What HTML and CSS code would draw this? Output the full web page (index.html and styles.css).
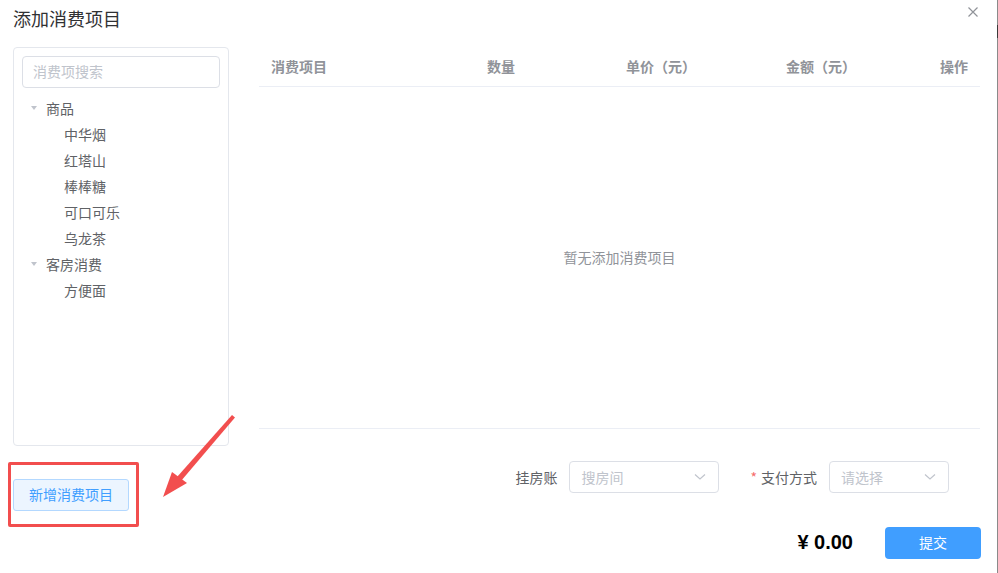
FILE: index.html
```html
<!DOCTYPE html>
<html lang="zh">
<head>
<meta charset="utf-8">
<title>添加消费项目</title>
<link rel="stylesheet" href="styles.css">
</head>
<body>
<div class="window">
  <div class="edge"><span class="edge-thumb"></span></div>
  <div class="dialog">
    <div class="header">
      <span class="title">添加消费项目</span>
      <svg class="close" width="10" height="10" viewBox="0 0 10 10"><path d="M0.5 0.5 L9.5 9.5 M9.5 0.5 L0.5 9.5" stroke="#909399" stroke-width="1.2" fill="none"/></svg>
    </div>
    <div class="body">
      <div class="left">
        <div class="panel">
          <div class="search">消费项搜索</div>
          <ul class="tree">
            <li class="node"><span class="caret"></span>商品</li>
            <li class="leaf">中华烟</li>
            <li class="leaf">红塔山</li>
            <li class="leaf">棒棒糖</li>
            <li class="leaf">可口可乐</li>
            <li class="leaf">乌龙茶</li>
            <li class="node"><span class="caret"></span>客房消费</li>
            <li class="leaf">方便面</li>
          </ul>
        </div>
        <div class="add-wrap">
          <button class="btn-add">新增消费项目</button>
          <span class="highlight"></span>
        </div>
      </div>
      <div class="right">
        <div class="thead">
          <span class="th">消费项目</span>
          <span class="th">数量</span>
          <span class="th num paren">单价（元）</span>
          <span class="th num paren">金额（元）</span>
          <span class="th num">操作</span>
        </div>
        <div class="empty">暂无添加消费项目</div>
        <div class="form-row">
          <span class="label">挂房账</span>
          <div class="select wide"><span>搜房间</span><svg width="12" height="8" viewBox="0 0 12 8"><path d="M1 1.5 L6 6 L11 1.5" stroke="#c0c4cc" stroke-width="1.2" fill="none"/></svg></div>
          <span class="label req"><span class="star">*</span>支付方式</span>
          <div class="select narrow"><span>请选择</span><svg width="12" height="8" viewBox="0 0 12 8"><path d="M1 1.5 L6 6 L11 1.5" stroke="#c0c4cc" stroke-width="1.2" fill="none"/></svg></div>
        </div>
        <div class="total-row">
          <span class="total">¥ 0.00</span>
          <button class="btn-submit">提交</button>
        </div>
      </div>
    </div>
  </div>
  <svg class="arrow" width="90" height="100" viewBox="0 0 90 100">
    <path d="M81 0 L84 2.5 L30 66 L26 62 Z" fill="#f24e4e"/>
    <path d="M12 82 L21 57 L36 68 Z" fill="#f24e4e"/>
  </svg>
</div>
</body>
</html>
```
FILE: styles.css
```css
* { box-sizing: border-box; }
html, body { margin: 0; padding: 0; background: #fff; }
body {
  font-family: "Noto Sans CJK SC", "Noto Sans", sans-serif;
  font-size: 14px;
  color: #606266;
}
.window {
  position: relative;
  width: 998px;
  height: 573px;
  overflow: hidden;
}
.edge {
  position: absolute;
  right: 0;
  top: 0;
  width: 1px;
  height: 573px;
  background: #8a8a8a;
}
.edge-thumb {
  position: absolute;
  top: 25px;
  left: 0;
  width: 1px;
  height: 13px;
  background: #3a3a3a;
}
.dialog { width: 997px; }
.header {
  height: 47px;
  display: flex;
  align-items: flex-start;
  justify-content: space-between;
  padding: 6px 19px 0 13px;
}
.title {
  font-size: 18px;
  line-height: 24px;
  color: #303133;
}
.close { margin-top: 1px; }
.body {
  display: flex;
  padding-left: 13px;
}
.left { width: 216px; }
.panel {
  height: 399px;
  border: 1px solid #e4e7ed;
  border-radius: 4px;
  padding: 8px 8px 0 8px;
}
.search {
  height: 32px;
  border: 1px solid #dcdfe6;
  border-radius: 4px;
  padding: 0 10px;
  line-height: 29px;
  color: #c0c4cc;
  font-size: 14px;
}
.tree {
  list-style: none;
  margin: 7px 0 0 0;
  padding: 0;
}
.tree li {
  height: 26px;
  line-height: 26px;
  color: #606266;
  font-size: 14px;
  display: flex;
  align-items: center;
}
.tree .node { padding-left: 9px; }
.tree .leaf { padding-left: 42px; }
.caret {
  width: 0;
  height: 0;
  border-left: 3px solid transparent;
  border-right: 3px solid transparent;
  border-top: 4px solid #c0c4cc;
  margin-right: 9px;
}
.add-wrap {
  position: relative;
  margin-top: 33px;
}
.btn-add {
  width: 116px;
  height: 32px;
  background: #ecf5ff;
  border: 1px solid #b3d8ff;
  border-radius: 3px;
  color: #409eff;
  font-family: inherit;
  font-size: 14px;
  padding: 0 0 2px 0;
}
.highlight {
  position: absolute;
  left: -5px;
  top: -17px;
  width: 131px;
  height: 65px;
  border: 3px solid #f24e4e;
  border-radius: 2px;
}
.right {
  width: 721px;
  margin-left: 30px;
}
.thead {
  display: grid;
  grid-template-columns: 216px 105px 120px 160px 120px;
  height: 40px;
  padding-bottom: 2px;
  border-bottom: 1px solid #ebeef5;
  align-items: center;
}
.th {
  padding: 0 12px;
  color: #909399;
  font-weight: bold;
  font-size: 14px;
}
.th.num { text-align: right; }
.th.paren { padding-right: 4px; }
.empty {
  height: 342px;
  padding-bottom: 2px;
  border-bottom: 1px solid #ebeef5;
  display: flex;
  align-items: center;
  justify-content: center;
  color: #909399;
  font-size: 14px;
}
.form-row {
  display: flex;
  justify-content: flex-end;
  align-items: center;
  padding-right: 31px;
  margin-top: 32px;
}
.label {
  color: #606266;
  font-size: 14px;
  margin-right: 12px;
}
.label.req { margin-left: 31px; }
.star { color: #f56c6c; margin-right: 4px; }
.select {
  height: 32px;
  border: 1px solid #dcdfe6;
  border-radius: 4px;
  display: flex;
  align-items: center;
  justify-content: space-between;
  padding: 0 12px 1px 11px;
  color: #c0c4cc;
  font-size: 14px;
}
.select.wide { width: 150px; }
.select.narrow { width: 120px; }
.total-row {
  display: flex;
  justify-content: flex-end;
  align-items: center;
  margin-top: 34px;
  margin-right: -1px;
}
.total {
  font-family: "Liberation Sans", "Noto Sans CJK SC", sans-serif;
  font-size: 20px;
  font-weight: bold;
  color: #000;
  margin-right: 32px;
  padding-bottom: 2px;
}
.btn-submit {
  width: 96px;
  height: 32px;
  background: #409eff;
  border: none;
  border-radius: 4px;
  color: #fff;
  font-family: inherit;
  font-size: 14px;
  padding: 0 0 2px 0;
}
.arrow {
  position: absolute;
  left: 151px;
  top: 415px;
}
```
